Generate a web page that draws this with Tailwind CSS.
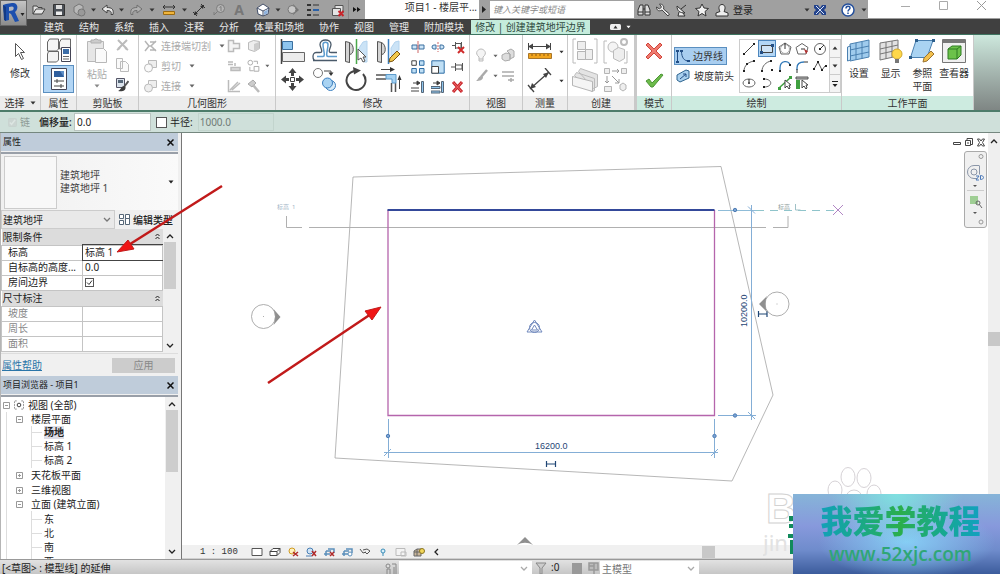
<!DOCTYPE html>
<html lang="zh-CN">
<head>
  <meta charset="UTF-8">
  <meta name="viewport" content="width=device-width, initial-scale=1.0">
  <title>项目1 - 楼层平面</title>
  <script src="https://cdn.jsdelivr.net/npm/@tailwindcss/browser@4"></script>
</head>
<body class="relative flex h-screen flex-col overflow-hidden bg-[#f0f0f0] font-['Noto_Sans','Noto_Sans_CJK_SC',sans-serif] text-[10px] leading-[14px] text-[#222]">

  <!-- shared glyphs -->
  <svg class="hidden">
    <symbol id="caret" viewBox="0 0 6 4"><path d="M0.5 0.5h5L3 3.5z" fill="currentColor"/></symbol>
    <symbol id="down" viewBox="0 0 8 6"><path d="M1 1l3 3 3-3" fill="none" stroke="currentColor" stroke-width="1.3"/></symbol>
    <symbol id="up" viewBox="0 0 8 6"><path d="M1 5l3-3 3 3" fill="none" stroke="currentColor" stroke-width="1.3"/></symbol>
    <symbol id="plus" viewBox="0 0 7 7"><path d="M.5.5h6v6h-6zM2 3.5h3M3.5 2v3" fill="#fff" stroke="#999"/></symbol>
    <symbol id="minus" viewBox="0 0 7 7"><path d="M.5.5h6v6h-6zM2 3.5h3" fill="#fff" stroke="#999"/></symbol>
  </svg>

  <!-- title bar -->
  <header class="flex h-[19px] shrink-0 items-center bg-[#a0a0a0] text-[#333]">
    <button aria-label="应用程序菜单" class="relative z-10 flex h-[26px] w-[27px] shrink-0 items-center self-start border border-[#666] bg-linear-to-b from-[#c4c4c4] to-[#8c8c8c]">
      <svg class="h-[22px] w-[25px]" viewBox="0 0 25 22"><path d="M2 3l3-1 6-1c6-1 7 6 3 9l4 9-4 1-4-8-2-1v7l-4 1z" fill="#1c4fae"/><path d="M8 5l3-.5c2.500 0 2 3.500 0 4l-3 .5z" fill="#b4b8c0"/><path d="M2 3l3 2v14l-2-1z" fill="#123a86"/><path d="M19.500 11h4l-2 3z" fill="#222"/></svg>
    </button>
    <button aria-label="打开" class="ml-[2px] flex w-[20px] justify-center"><svg class="h-[14px] w-[14px]" viewBox="0 0 14 14"><path d="M1 11V3h4l1 1.500h4V6M1 11l3-5h9l-3 5z" fill="#e4e4e4" stroke="#444"/></svg></button>
    <button aria-label="保存" class="flex w-[20px] justify-center"><svg class="h-[14px] w-[14px]" viewBox="0 0 14 14"><path d="M1.500 1.500h11v11h-11z" fill="#4b5057" stroke="#333"/><path d="M4 2h6v4H4z" fill="#ddd"/><path d="M4 8.500h6V12H4z" fill="#eee"/></svg></button>
    <button aria-label="同步" class="flex w-[20px] justify-center"><svg class="h-[14px] w-[14px]" viewBox="0 0 14 14"><path d="M2 4l5-3 4 2v6l-5 3-4-3z" fill="#b8b8b8" stroke="#777"/><circle cx="9.500" cy="9.500" r="3.500" fill="#999" stroke="#777"/></svg></button>
    <svg class="h-[4px] w-[9px]"><use href="#caret"/></svg>
    <button aria-label="撤销" class="flex w-[19px] justify-center"><svg class="h-[14px] w-[14px]" viewBox="0 0 14 14"><path d="M1 6l5-4v2.500c5 0 7 2 6 7h-2c1-3-1-4-4-4V10z" fill="#e8e8e8" stroke="#444"/></svg></button>
    <svg class="h-[4px] w-[9px]"><use href="#caret"/></svg>
    <button aria-label="重做" class="flex w-[20px] justify-center"><svg class="h-[14px] w-[14px]" viewBox="0 0 14 14"><path d="M13 6L8 2v2.500c-5 0-7 2-6 7h2c-1-3 1-4 4-4V10z" fill="#b0b0b0" stroke="#707070"/></svg></button>
    <svg class="h-[4px] w-[12px]"><use href="#caret"/></svg>
    <button aria-label="测量" class="flex w-[22px] justify-center"><svg class="h-[14px] w-[14px]" viewBox="0 0 14 14"><path d="M1 4h12M3 2L1 4l2 2M11 2l2 2-2 2" fill="none" stroke="#333"/><path d="M1.500 8.500h11v3h-11z" fill="#f0b53c" stroke="#9b6a10"/></svg></button>
    <svg class="h-[4px] w-[9px]"><use href="#caret"/></svg>
    <button aria-label="对齐尺寸标注" class="flex w-[20px] justify-center"><svg class="h-[14px] w-[14px]" viewBox="0 0 14 14"><path d="M2 12L12 2M1 9l4 4M9 1l4 4" fill="none" stroke="#333"/><path d="M2 12l1-4 3 3zM12 2l-4 1 3 3z" fill="#333"/></svg></button>
    <button aria-label="标记" class="flex w-[20px] justify-center"><svg class="h-[14px] w-[14px]" viewBox="0 0 14 14"><circle cx="8.500" cy="5.500" r="4" fill="#b4b4b4" stroke="#7c7c7c"/><path d="M5.500 8.500L2 12V9M7.500 4.500l1.500-1v4.500" fill="none" stroke="#7c7c7c"/></svg></button>
    <button aria-label="文字" class="flex w-[20px] justify-center font-bold text-[#777] text-[14px]">A</button>
    <button aria-label="三维视图" class="ml-[4px] flex w-[20px] justify-center"><svg class="h-[14px] w-[14px]" viewBox="0 0 14 14"><path d="M1 5l6-4 6 4-1 6-5 2-5-2z" fill="#fff" stroke="#44506a"/><path d="M1 5l6 3 6-3M7 8v5" fill="none" stroke="#44506a"/><path d="M8 8.500l4-2-.5 4L8 12z" fill="#8fb2dd"/></svg></button>
    <svg class="h-[4px] w-[10px]"><use href="#caret"/></svg>
    <button aria-label="剖面" class="flex w-[19px] justify-center"><svg class="h-[14px] w-[14px]" viewBox="0 0 14 14"><path d="M7 1l6 6-6 5z" fill="#777"/><circle cx="6" cy="6.500" r="4" fill="#c8c8c8" stroke="#777"/></svg></button>
    <button aria-label="细线" class="flex w-[22px] justify-center"><svg class="h-[14px] w-[14px]" viewBox="0 0 14 14"><path d="M1 2h4M1 7h4M1 12h4" stroke="#333" stroke-width="2"/><path d="M7 2h6M7 12h6" stroke="#333"/><path d="M7 7h6" stroke="#2c62a8" stroke-width="2"/></svg></button>
    <button aria-label="关闭隐藏窗口" class="ml-[4px] flex w-[20px] justify-center"><svg class="h-[14px] w-[14px]" viewBox="0 0 14 14"><path d="M1.500 5.500h8v7h-8zM4 5V2.500h8V10" fill="#e4e4e4" stroke="#555"/><path d="M7.500 8l5 5m0-5l-5 5" stroke="#c9252b" stroke-width="2"/></svg></button>
    <button aria-label="更多" class="flex h-full w-[17px] items-center justify-center border-l border-[#888]"><svg class="h-[5px] w-[8px]" viewBox="0 0 8 5"><path d="M0 0l3.500 2.500L0 5zM4 0l3.500 2.500L4 5z" fill="#111"/></svg></button>
    <div class="h-full w-[114px] truncate bg-white pr-[2px] text-right leading-[15px] text-[#333]">项目1 - 楼层平...</div>
    <button aria-label="展开搜索" class="flex h-full w-[11px] items-center justify-center"><svg class="h-[7px] w-[5px]" viewBox="0 0 5 7"><path d="M0 0l4 3.500L0 7z" fill="#222"/></svg></button>
    <input type="text" aria-label="搜索" placeholder="键入关键字或短语" class="h-[17px] w-[144px] bg-white px-[3px] text-[9px] italic placeholder:text-[#888]">
    <button aria-label="查找" class="flex w-[20px] justify-center"><svg class="h-[14px] w-[14px]" viewBox="0 0 14 14"><path d="M3 2h3v10H1V7zM8 2h3l2 5v5H8z" fill="#ddd" stroke="#333"/><path d="M6 6h2M1 9h5M8 9h5" stroke="#333"/></svg></button>
    <button aria-label="速博应用" class="flex w-[18px] justify-center"><svg class="h-[14px] w-[14px]" viewBox="0 0 14 14"><path d="M6 7l6 6 1.500-2-6-5c1-3-1-5-4-5l2 3-2 2-3-2c0 3 2 5 5.500 3z" fill="#eee" stroke="#444"/></svg></button>
    <button aria-label="通讯中心" class="flex w-[20px] justify-center"><svg class="h-[14px] w-[14px]" viewBox="0 0 14 14"><path d="M2 3c0 5 3 7 8 7zM6 6l5-4M4 9l-1 4h7l-2-3" fill="#eee" stroke="#333"/></svg></button>
    <button aria-label="收藏夹" class="flex w-[20px] justify-center"><svg class="h-[14px] w-[14px]" viewBox="0 0 14 14"><path d="M7 1l2 4 4.500.5-3.500 3 1 4.500-4-2.500L3 13l1-4.500-3.500-3L5 5z" fill="#f2f2f2" stroke="#333"/></svg></button>
    <button class="flex items-center gap-[4px] pl-[3px] text-[#222]"><svg class="h-[14px] w-[14px]" viewBox="0 0 14 14"><path d="M1 13v-3l4-1.500C3 5 4 1.500 7 1.500S11 5 9 8.500l4 1.500v3z" fill="#eee" stroke="#333"/></svg>登录</button>
    <div class="flex h-full flex-1 items-center justify-end">
      <svg class="h-[4px] w-[8px]"><use href="#caret"/></svg>
      <button aria-label="Exchange Apps" class="mr-[14px] ml-[2px]"><svg class="h-[14px] w-[14px]" viewBox="0 0 14 14"><path d="M1 2h4l2 3 2-3h4v3l-2 2 2 2v3H9L7 9l-2 3H1V9l2-2-2-2z" fill="#23438c"/><path d="M3 3l8 8M11 3l-8 8" stroke="#d8e4f8"/></svg></button>
      <button aria-label="帮助"><svg class="h-[14px] w-[14px]" viewBox="0 0 14 14"><circle cx="7" cy="7" r="6" fill="#fff" stroke="#25509c" stroke-width="1.500"/><path d="M5 5.500c0-3 4-3 4-.5 0 1.500-2 1.500-2 3.500M7 9.500V11" fill="none" stroke="#25509c" stroke-width="1.500"/></svg></button>
      <svg class="ml-[5px] h-[4px] w-[8px]"><use href="#caret"/></svg>
    </div>
    <div class="flex h-[18px] w-[132px] items-start justify-around self-start bg-white pt-px pl-[18px]">
      <button aria-label="最小化"><svg class="h-[9px] w-[9px]" viewBox="0 0 9 9"><path d="M0 5.500h9" stroke="#aaa"/></svg></button>
      <button aria-label="最大化"><svg class="h-[9px] w-[9px]" viewBox="0 0 9 9"><path d="M.5.5h8v8h-8z" fill="none" stroke="#aaa"/></svg></button>
      <button aria-label="关闭"><svg class="h-[9px] w-[9px]" viewBox="0 0 9 9"><path d="M0 0l9 9M9 0L0 9" stroke="#999"/></svg></button>
    </div>
  </header>

  <!-- tabs -->
  <nav class="flex h-[16px] shrink-0 items-end gap-[15px] border-b border-[#3f7561] bg-[#404040] pl-[44px] whitespace-nowrap text-[#e8e8e8]">
    <a href="#">建筑</a><a href="#">结构</a><a href="#">系统</a><a href="#">插入</a><a href="#">注释</a><a href="#">分析</a><a href="#">体量和场地</a><a href="#">协作</a><a href="#">视图</a><a href="#">管理</a><a href="#">附加模块</a>
    <a href="#" class="-ml-[8px] w-[119px] bg-[#c5ecdc] text-center text-[#2f4a41]">修改 | 创建建筑地坪边界</a>
    <button aria-label="最小化功能区" class="mb-[4px] ml-[5px] flex items-center gap-[5px] text-white"><svg class="h-[6px] w-[11px]" viewBox="0 0 11 6"><rect width="11" height="6" rx="1.500" fill="#eee"/><path d="M3.500 4.500h4l-2-3z" fill="#333"/></svg><svg class="h-[4px] w-[5px]"><use href="#caret"/></svg></button>
  </nav>

  <!-- ribbon -->
  <section class="flex h-[77px] shrink-0 border-b-2 border-[#4d7c6a] bg-white text-[#333] [&>section]:flex [&>section]:shrink-0 [&>section]:flex-col [&>section]:border-r [&>section]:border-[#c9c9c9] [&>section>div]:flex-1 [&_h2]:h-[14px] [&_h2]:bg-[#ececec] [&_h2]:text-center">
    <section class="w-[41px]">
      <div class="flex flex-col items-center pt-[7px]">
        <button class="flex flex-col items-center gap-[5px]"><svg class="h-[19px] w-[12px]" viewBox="0 0 12 19"><path d="M1.500 1.500v13l3-3 3 6 2-1-3-6h4z" fill="#fff" stroke="#555"/></svg>修改</button>
      </div>
      <h2 class="flex items-center justify-center gap-[5px]">选择 <svg class="h-[4px] w-[6px]"><use href="#caret"/></svg></h2>
    </section>
    <section class="w-[36px]">
      <div class="flex flex-col items-center gap-[2px] pt-[2px]">
        <button aria-label="类型属性"><svg class="h-[26px] w-[26px]" viewBox="0 0 26 26"><path d="M1.500 5l2-3h9v10l-2 2h-9zM13.500 5l2-3h9v10h-11z" fill="#f4f4f4" stroke="#666"/><path d="M1.500 17l1-2.500h10V23l-2 2h-9z" fill="#f4f4f4" stroke="#666"/><path d="M15.500 10.500h9v14h-9z" fill="#fff" stroke="#445"/><path d="M17 12h6v5h-6z" fill="#3d6ea8"/><path d="M17 19.500h6M17 22h6" stroke="#666"/></svg></button>
        <button aria-label="属性" class="flex h-[28px] w-[31px] items-center justify-center border border-[#5a8fc0] bg-[#b3d6f5]"><svg class="h-[24px] w-[18px]" viewBox="0 0 18 24"><path d="M1.500 1.500h15v21h-15z" fill="#fff" stroke="#445"/><path d="M4 4h10v6H4z" fill="#2f5f9e"/><path d="M10 4h4v6z" fill="#5e8fc8"/><path d="M4 14h10M4 19h10M7 12v4M11 17v4" stroke="#444"/></svg></button>
      </div>
      <h2>属性</h2>
    </section>
    <section class="w-[62px]">
      <div class="flex justify-between px-[9px] pt-[3px] text-[#aaa]">
        <button class="flex w-[22px] flex-col items-center gap-[3px] whitespace-nowrap"><svg class="h-[26px] w-[22px]" viewBox="0 0 22 26"><path d="M1.500 3.500h16v20h-16z" fill="#e6e6e6" stroke="#b8b8b8"/><path d="M5 5V2h3l1-1h2l1 1h3v3z" fill="#ccc" stroke="#b0b0b0"/><path d="M9.500 10.500h8l3 3v11h-11z" fill="#fafafa" stroke="#b8b8b8"/></svg>粘贴<svg class="h-[4px] w-[6px] text-[#888]"><use href="#caret"/></svg></button>
        <div class="flex flex-col gap-[6px]">
          <button aria-label="剪切"><svg class="h-[14px] w-[13px]" viewBox="0 0 13 14"><path d="M2 2l9 9M11 2l-9 9M1 12l3-2M12 12l-3-2" stroke="#bbb" stroke-width="2"/></svg></button>
          <button aria-label="复制"><svg class="h-[14px] w-[13px]" viewBox="0 0 13 14"><path d="M.5.5h6v10h-6zM4.500 3.500h5l3 3v7h-8z" fill="#fafafa" stroke="#bbb"/></svg></button>
          <button aria-label="匹配类型"><svg class="h-[14px] w-[13px]" viewBox="0 0 13 14"><path d="M.5.5h8v9h-8z" fill="#dbe3ec" stroke="#556"/><path d="M2 2h5v3H2z" fill="#567"/><path d="M12.500 3L8 9" stroke="#555" stroke-width="2"/><path d="M8 8c-3 0-3 4-6 5 4 1 8 0 7.500-4z" fill="#3d3d3d"/></svg></button>
        </div>
      </div>
      <h2>剪贴板</h2>
    </section>
    <section class="w-[137px]">
      <div class="flex justify-between pt-[4px] pr-[5px] pl-[5px] whitespace-nowrap text-[#aaa]">
        <div class="flex flex-col gap-[6px]">
          <button class="flex items-center gap-[4px]"><svg class="h-[14px] w-[13px]" viewBox="0 0 13 14"><path d="M1 2l4 5-4 5M4 7h3M12 2L7 7l5 5M6 3h6M6 11h6" fill="none" stroke="#b5b5b5" stroke-width="1.500"/></svg>连接端切割<svg class="ml-[4px] h-[4px] w-[6px] text-[#666]"><use href="#caret"/></svg></button>
          <button class="flex items-center gap-[4px]"><svg class="h-[14px] w-[13px]" viewBox="0 0 13 14"><path d="M4.500 1.500h8v7h-4a4 4 0 0 0-4-4z" fill="#eee" stroke="#bbb"/><circle cx="4.500" cy="9" r="4" fill="#fafafa" stroke="#bbb"/></svg>剪切<svg class="ml-[4px] h-[4px] w-[6px] text-[#666]"><use href="#caret"/></svg></button>
          <button class="flex items-center gap-[4px]"><svg class="h-[14px] w-[13px]" viewBox="0 0 13 14"><path d="M4.500 1.500h8v7h-4M4.500 1.500V5" fill="#eee" stroke="#bbb"/><circle cx="4.500" cy="9" r="4" fill="#eee" stroke="#bbb"/></svg>连接<svg class="ml-[4px] h-[4px] w-[6px] text-[#666]"><use href="#caret"/></svg></button>
        </div>
        <div class="grid grid-cols-[20px_23px] content-start gap-y-[6px]">
          <button aria-label="墙连接"><svg class="h-[14px] w-[14px]" viewBox="0 0 14 14"><path d="M1.500 1.500h5v3h6v5h-6v3h-5z" fill="#f4f4f4" stroke="#bbb" stroke-width="1.500"/></svg></button>
          <button aria-label="拆分面"><svg class="h-[14px] w-[14px]" viewBox="0 0 14 14"><path d="M1.500 3.500l5-2 6 1v7l-5 3-6-2z" fill="#eee" stroke="#bbb"/><path d="M7 5l5-2v7l-5 2z" fill="#ccc"/></svg></button>
          <button aria-label="梁连接"><svg class="h-[14px] w-[14px]" viewBox="0 0 14 14"><path d="M1 3h5M1 5.500h5M4 8.500h9v3H4zM8 4v3" fill="#ddd" stroke="#bbb" stroke-width="1.500"/></svg></button>
          <button aria-label="填色" class="flex items-center gap-[5px]"><svg class="h-[14px] w-[14px]" viewBox="0 0 14 14"><circle cx="3.500" cy="3.500" r="2.500" fill="none" stroke="#aaa"/><path d="M7 2h4v3M3 8v4h4M7.500 7.500h5v5h-5z" fill="none" stroke="#aaa"/></svg><svg class="h-[4px] w-[5px] text-[#666]"><use href="#caret"/></svg></button>
          <button aria-label="连接屋顶"><svg class="h-[14px] w-[14px]" viewBox="0 0 14 14"><path d="M1.500 1v11.500H13M3 11L11 3M5 11l8-7" fill="none" stroke="#bbb" stroke-width="1.500"/></svg></button>
          <button aria-label="拆除"><svg class="h-[14px] w-[14px]" viewBox="0 0 14 14"><path d="M1 5l5-4 3 3-4 4z" fill="#ccc" stroke="#aaa"/><path d="M6 6l6 7" stroke="#bbb" stroke-width="2.500"/></svg></button>
        </div>
      </div>
      <h2>几何图形</h2>
    </section>
    <section class="w-[194px]">
      <div class="flex pt-[4px] pl-[4px]">
        <div class="grid grid-cols-[repeat(4,32px)] content-start gap-y-[3px]">
          <button aria-label="对齐"><svg class="h-[25px] w-[26px]" viewBox="0 0 26 25"><path d="M1.500 0v25" stroke="#444" stroke-width="1.500"/><path d="M2.500 2.500h10v8h-10z" fill="#8ec5ee" stroke="#3a6f9f"/><path d="M2.500 13.500h22v9h-22z" fill="#ececec" stroke="#666"/></svg></button>
          <button aria-label="偏移"><svg class="h-[25px] w-[26px]" viewBox="0 0 26 25"><path d="M1 21.500h24M25 13.500h-6c-4 0 0-5 0-8 0-6-11-6-11 0 0 3 4 8 0 8H4c-4 0-4 8 0 8" fill="none" stroke="#4a5a6a" stroke-width="1.300"/><path d="M25 17.500h-9c-3 0 0-7 0-12 0-3-5-3-5 0 0 5 3 12 0 12H5" fill="none" stroke="#5d9cce" stroke-width="1.500"/></svg></button>
          <button aria-label="镜像-拾取轴"><svg class="h-[25px] w-[26px]" viewBox="0 0 26 25"><path d="M1.500 2.500l4 1c5 2 5 12 0 12v8l-4-1z" fill="#d4d4d4" stroke="#555"/><path d="M5.500 3.500v20" stroke="#555"/><path d="M23 2l-4 1-4 6v8l5-2v8h3z" fill="#cbe3f6" stroke="#b3d3ee"/><path d="M12.500 0v25" stroke="#4aa84a" stroke-width="1.500"/><path d="M14 10v11l3-2 2 4 2-1-2-4h3z" fill="#fff" stroke="#555"/></svg></button>
          <button aria-label="镜像-绘制轴"><svg class="h-[25px] w-[26px]" viewBox="0 0 26 25"><path d="M1.500 2.500l4 1c5 2 5 12 0 12v8l-4-1z" fill="#d4d4d4" stroke="#555"/><path d="M5.500 3.500v20" stroke="#555"/><path d="M23 2l-4 1-4 6v8l8-6z" fill="#cbe3f6" stroke="#b3d3ee"/><path d="M12.500 0v25" stroke="#3b7fc0" stroke-width="1.500"/><path d="M13 23l1-4 7-7 3 3-7 7z" fill="#f2c94d" stroke="#7a5310"/></svg></button>
          <button aria-label="移动"><svg class="h-[25px] w-[25px]" viewBox="0 0 25 25"><path d="M12.500 1l4 5h-2.500v3h-3V6H8.500zM12.500 24l4-5h-2.500v-3h-3v3H8.500zM1 12.500l5-4V11h3v3H6v2.500zM24 12.500l-5-4V11h-3v3h3v2.500z" fill="#444"/><path d="M10.500 10.500h4v4h-4z" fill="#fff" stroke="#444"/></svg></button>
          <button aria-label="复制图元"><svg class="h-[25px] w-[26px]" viewBox="0 0 26 25"><circle cx="6" cy="6" r="4.500" fill="#fff" stroke="#777"/><circle cx="18.500" cy="18.500" r="5" fill="#d8ecf9" stroke="#3b7fc0"/><circle cx="15.500" cy="16" r="5" fill="#a9d3f2" stroke="#3b7fc0"/><path d="M12 4h7v2" fill="none" stroke="#444"/><path d="M16.500 5.500h5L19 9z" fill="#333"/></svg></button>
          <button aria-label="旋转"><svg class="h-[25px] w-[25px]" viewBox="0 0 25 25"><path d="M19 7a9.500 9.500 0 1 1-8-3" fill="none" stroke="#444" stroke-width="2"/><path d="M9 0l8 3.500-7 4z" fill="#444"/></svg></button>
          <button aria-label="修剪/延伸为角"><svg class="h-[25px] w-[26px]" viewBox="0 0 26 25"><path d="M5 2.500h10" stroke="#444"/><path d="M14 0l5 2.500L14 5zM21.500 13l2-5 2 5z" fill="#333"/><path d="M23.500 22V12" stroke="#444"/><path d="M0 8h10M0 12h10M15.500 16v9M19.500 16v9" stroke="#555" stroke-width="1.500"/><path d="M10 7.500h10V16h-4v-4h-6z" fill="#a5d2f2" stroke="#5b9acb"/></svg></button>
        </div>
        <div class="grid grid-cols-[repeat(3,20px)] content-start gap-y-[6px] pt-px pl-[3px]">
          <button aria-label="拆分图元"><svg class="h-[14px] w-[14px]" viewBox="0 0 14 14"><path d="M1 5h5v4H1zM8 5h5v4H8z" fill="#cde5f7" stroke="#3b6f9f"/><path d="M7 1v12" stroke="#c66"/></svg></button>
          <button aria-label="用间隙拆分"><svg class="h-[14px] w-[14px]" viewBox="0 0 14 14"><path d="M5 5H3a2 2 0 0 0 0 4h2zM9 5h2a2 2 0 0 1 0 4H9z" fill="#cde5f7" stroke="#3b6f9f"/><path d="M7 2v10" stroke="#c66" stroke-dasharray="2 1"/></svg></button>
          <button aria-label="解锁"><svg class="h-[14px] w-[14px]" viewBox="0 0 14 14"><path d="M1 5.500h3M4.500 2v7M5 3.500h5V8H5M10.500 2v7" fill="none" stroke="#555"/><path d="M7 7l6 6m0-6l-6 6" stroke="#cf2b2b" stroke-width="2"/></svg></button>
          <button aria-label="阵列"><svg class="h-[14px] w-[14px]" viewBox="0 0 14 14"><path d="M.8.8h4.500v4.500H.8z" fill="#fff" stroke="#444"/><path d="M8.500.8H13v4.500H8.500zM.8 8.500h4.500V13H.8zM8.500 8.500H13V13H8.500z" fill="#bfdff5" stroke="#2f6ea6"/></svg></button>
          <button aria-label="缩放"><svg class="h-[14px] w-[14px]" viewBox="0 0 14 14"><path d="M.8.8h12.400v12.400H.8z" fill="#bfdff5" stroke="#2f6ea6"/><path d="M.8 6.500h6.700v6.700H.8z" fill="#fff" stroke="#444"/></svg></button>
          <button aria-label="锁定"><svg class="h-[14px] w-[14px]" viewBox="0 0 14 14"><path d="M0 7h4M4.500 3v8M5 5h6v4H5M11.500 3v8" fill="none" stroke="#555"/></svg></button>
          <button aria-label="修剪/延伸单个"><svg class="h-[14px] w-[14px]" viewBox="0 0 14 14"><path d="M2 3h4M6 1l3 2-3 2zM0 8h8M0 11h8" fill="#333" stroke="#444"/><path d="M10.500 1.500h2v11h-2z" fill="#8ec5ee" stroke="#567"/></svg></button>
          <button aria-label="修剪/延伸多个"><svg class="h-[14px] w-[14px]" viewBox="0 0 14 14"><path d="M2 3h4M6 1l3 2-3 2z" fill="#333" stroke="#444"/><path d="M0 6.500h9v2H0zM0 11h9v2H0z" fill="#8ec5ee" stroke="#567"/><path d="M10.500 1.500h2v11h-2z" fill="#8ec5ee" stroke="#567"/></svg></button>
          <button aria-label="删除"><svg class="h-[14px] w-[14px]" viewBox="0 0 14 14"><path d="M2 2l9 10M11 2L2 12" stroke="#c8252b" stroke-width="3"/><path d="M2.500 2.500l8 9M10.500 2.500l-8 9" stroke="#f07070"/></svg></button>
        </div>
      </div>
      <h2>修改</h2>
    </section>
    <section class="w-[53px]">
      <div class="grid grid-cols-[26px_18px] content-center gap-y-[4px] pl-[5px] text-[#666]">
        <button aria-label="隐藏" class="flex items-center gap-[4px]"><svg class="h-[16px] w-[14px]" viewBox="0 0 14 16"><path d="M4 9C-1 5 3 1 6 1s7 4 2 8v4H4zM4 11h4" fill="#f4f4f4" stroke="#bbb"/></svg><svg class="h-[4px] w-[5px]"><use href="#caret"/></svg></button>
        <button aria-label="置换"><svg class="h-[16px] w-[14px]" viewBox="0 0 14 16"><path d="M1 7l4-2 4 1v6l-5 1-3-2zM6 3l4-2 3 2v6l-4 2V6z" fill="#ddd" stroke="#aaa"/></svg></button>
        <button aria-label="替换" class="flex items-center gap-[4px]"><svg class="h-[16px] w-[14px]" viewBox="0 0 14 16"><path d="M12 2L6 9" stroke="#aaa" stroke-width="2.500"/><path d="M6 8c-3 1-3 4-5 5 4 0 7-1 7-4z" fill="#aaa"/></svg><svg class="h-[4px] w-[5px]"><use href="#caret"/></svg></button>
        <button aria-label="线处理"><svg class="h-[16px] w-[14px]" viewBox="0 0 14 16"><path d="M1 4h12M1 8h12M7 12h6M10 10v4" stroke="#aaa" stroke-width="1.500"/></svg></button>
      </div>
      <h2>视图</h2>
    </section>
    <section class="w-[45px]">
      <div class="flex flex-col gap-[4px] pt-[5px] pl-[4px] text-[#333]">
        <button aria-label="测量距离" class="flex items-center gap-[7px]"><svg class="h-[24px] w-[25px]" viewBox="0 0 25 24"><path d="M2 6.500h21M1.500 3v7M23.500 3v7" stroke="#444"/><path d="M1 6.500l5-3v6zM24 6.500l-5-3v6z" fill="#444"/><path d="M1.500 13.500h23v5h-23z" fill="#f2a51e" stroke="#a8762a"/><path d="M5 14v2M9 14v2M13 14v2M17 14v2M21 14v2" stroke="#8c5a10"/></svg><svg class="h-[4px] w-[5px]"><use href="#caret"/></svg></button>
        <button aria-label="尺寸标注" class="flex items-center gap-[7px]"><svg class="h-[25px] w-[25px]" viewBox="0 0 25 25"><path d="M3 21L22 4M1 17l6 7M18 0l6 7" stroke="#444" stroke-width="1.300"/><path d="M3 21l2-6 4 4zM22 4l-6 2 3 4z" fill="#444"/></svg><svg class="h-[4px] w-[5px]"><use href="#caret"/></svg></button>
      </div>
      <h2>测量</h2>
    </section>
    <section class="w-[67px]">
      <div class="grid grid-cols-[31px_26px] content-start gap-y-[3px] pt-[3px] pl-[4px]">
        <button aria-label="创建部件"><svg class="h-[26px] w-[26px]" viewBox="0 0 26 26"><path d="M4 1H1v24h3M22 1h3v24h-3" fill="none" stroke="#bbb"/><path d="M5.500 3.500h8v8h-8zM5.500 13.500h8v8h-8zM13.500 11.500h7v10h-7z" fill="#eee" stroke="#b5b5b5"/></svg></button>
        <button aria-label="创建零件"><svg class="h-[26px] w-[26px]" viewBox="0 0 26 26"><path d="M4 3H1v22h3M21 25h3V13" fill="none" stroke="#bbb"/><circle cx="10" cy="9" r="5" fill="#f4f4f4" stroke="#bbb"/><path d="M10.500 12.500l5-3 6 2v9l-5 3-6-3z" fill="#eee" stroke="#bbb"/><circle cx="21" cy="4" r="3" fill="#fff" stroke="#bbb" stroke-width="2"/></svg></button>
        <button aria-label="创建组"><svg class="h-[26px] w-[26px]" viewBox="0 0 26 26"><path d="M6.500 4.500l2-3 17 6v12l-4 2zM2.500 8.500l2-3 18 6v12l-3 1z" fill="#e4e4e4" stroke="#bbb"/><path d="M.5 9.500l20 5v10l-20-6z" fill="#f4f4f4" stroke="#b5b5b5"/></svg></button>
        <button aria-label="创建类似"><svg class="h-[26px] w-[26px]" viewBox="0 0 26 26"><path d="M1.500 1.500h5v5h-5zM18.500 1.500h5v5h-5zM1.500 19.500h7v5h-7zM17 18l3-2 3 2v4l-3 2-3-2z" fill="#eee" stroke="#b5b5b5"/><path d="M9 4h7M4 9v7M9 9l7 7M14 2l2 2-2 2M2 14l2 2 2-2M16 12v4h-4" fill="none" stroke="#999"/></svg></button>
      </div>
      <h2>创建</h2>
    </section>
    <section class="w-[37px] border-l-2 [&>h2]:bg-[#cdebe0]">
      <div class="flex flex-col items-center gap-[9px] pt-[6px]">
        <button aria-label="取消编辑"><svg class="h-[20px] w-[18px]" viewBox="0 0 18 20"><path d="M1 4l2-2 6 6 6-6 2 2-6 6 6 6-2 2-6-6-6 6-2-2 6-6z" fill="#ee7b70" stroke="#d2453b"/></svg></button>
        <button aria-label="完成编辑"><svg class="h-[20px] w-[19px]" viewBox="0 0 19 20"><path d="M1 11l3-2 3 4 9-9 2 1L8 17H6z" fill="#6cbb4a" stroke="#4c9536"/></svg></button>
      </div>
      <h2>模式</h2>
    </section>
    <section class="w-[170px] [&>h2]:bg-[#cdebe0]">
      <div class="flex gap-[5px] pt-[4px] pl-[2px]">
        <div class="flex w-[60px] flex-col gap-[2px] pt-[8px] whitespace-nowrap">
          <button class="flex h-[18px] w-[53px] items-center gap-[3px] border border-[#5a8fc0] bg-[#a9cef0]"><svg class="h-[15px] w-[15px]" viewBox="0 0 15 15"><path d="M2.500 2v11M6.500 2c0 7 3 10 7 10" fill="none" stroke="#234f86"/><path d="M1 1h3v2H1zM1 12h3v2H1zM5 1h3v2H5zM12 11h3v2h-3z" fill="#234f86"/></svg>边界线</button>
          <button class="flex h-[18px] items-center gap-[4px] pl-[2px]"><svg class="h-[14px] w-[14px]" viewBox="0 0 14 14"><path d="M1 6l9-5 3 1v7L4 13l-3-2z" fill="#a9d0ee" stroke="#2f6590"/><path d="M4 10l6-5M10 5v3M10 5H7" stroke="#234f86"/></svg>坡度箭头</button>
        </div>
        <div class="flex h-[54px] border border-[#ccc]">
          <div class="grid grid-cols-5 place-items-center [&_svg]:h-[14px] [&_svg]:w-[14px] [&>button]:flex [&>button]:h-[17px] [&>button]:w-[18px] [&>button]:items-center [&>button]:justify-center">
            <button aria-label="直线"><svg viewBox="0 0 14 14"><path d="M2 12L12 2" stroke="#444"/><path d="M1 11h2v2H1zM11 1h2v2h-2z" fill="#222"/></svg></button>
            <button aria-label="矩形" class="border border-[#4d86bd] bg-[#b3d6f5]"><svg viewBox="0 0 14 14"><path d="M1.500 3.500h11v7h-11z" fill="#cfe3f5" stroke="#444"/><path d="M0 9h3v3H0zM11 2h3v3h-3z" fill="#234f86"/></svg></button>
            <button aria-label="内接多边形"><svg viewBox="0 0 14 14"><path d="M7 1l6 4-2 7H3L1 5z" fill="none" stroke="#666"/><circle cx="7" cy="7" r="4.500" fill="none" stroke="#aaa"/><path d="M7 1v6" stroke="#333"/></svg></button>
            <button aria-label="外接多边形"><svg viewBox="0 0 14 14"><path d="M7 1.500l6 4-2 6.500H3L1 5.500z" fill="none" stroke="#666"/><path d="M6 7h4" stroke="#333"/><path d="M9 7l4 2-2 3z" fill="#b03030"/></svg></button>
            <button aria-label="圆形"><svg viewBox="0 0 14 14"><circle cx="7" cy="7" r="5.500" fill="none" stroke="#666"/><path d="M7 7l4-4" stroke="#333"/><path d="M6 6h2v2H6z" fill="#222"/></svg></button>
            <button aria-label="起点-终点-半径弧"><svg viewBox="0 0 14 14"><path d="M2 12c0-5 4-9 10-10" fill="none" stroke="#666"/><path d="M1 11h2v2H1zM11 1h2v2h-2zM4 4h2v2H4z" fill="#222"/></svg></button>
            <button aria-label="圆心-端点弧"><svg viewBox="0 0 14 14"><path d="M2 12c0-5 4-9 9-10" fill="none" stroke="#666"/><path d="M1 11h2v2H1zM10 1h2v2h-2zM11 10h2v2h-2z" fill="#222"/></svg></button>
            <button aria-label="相切弧"><svg viewBox="0 0 14 14"><path d="M2 13V9c0-8 9-8 10-3" fill="none" stroke="#2f78b8" stroke-width="1.300"/><path d="M1 11h2v2H1zM11 5h2v2h-2z" fill="#222"/></svg></button>
            <button aria-label="圆角弧"><svg viewBox="0 0 14 14"><path d="M2 11V9c0-4 3-6 7-6" fill="none" stroke="#2f78b8" stroke-width="1.300"/><path d="M9 3h4M2 10v4" stroke="#333"/></svg></button>
            <button aria-label="样条曲线"><svg viewBox="0 0 14 14"><path d="M1 10l4-7 4 8 3-4" fill="none" stroke="#555"/><path d="M0 9h2v2H0zM4 2h2v2H4zM8 10h2v2H8zM12 6h2v2h-2z" fill="#222"/></svg></button>
            <button aria-label="椭圆"><svg viewBox="0 0 14 14"><ellipse cx="7" cy="7" rx="6" ry="4" fill="none" stroke="#666"/><path d="M7 3v5M6 7h2" stroke="#222"/></svg></button>
            <button aria-label="半椭圆"><svg viewBox="0 0 14 14"><path d="M4 3c9 0 9 8 0 8" fill="none" stroke="#666"/><path d="M3 2h2v2H3zM3 10h2v2H3z" fill="#222"/></svg></button>
            <button aria-label="拾取线"><svg viewBox="0 0 14 14"><path d="M1 12L12 2" stroke="#3fa03f" stroke-width="1.500"/><path d="M0 11h3v3H0zM11 0h3v3h-3z" fill="#3fa03f"/><path d="M7 4v8l2-2 2 3 1-1-1-3h2z" fill="#fff" stroke="#444"/></svg></button>
            <button aria-label="拾取墙"><svg viewBox="0 0 14 14"><path d="M1 1h12v2H1z" fill="#bbb" stroke="#555"/><path d="M1 4h4v9H1z" fill="#3fa03f"/><path d="M7 4v8l2-2 2 3 1-1-1-3h2z" fill="#fff" stroke="#444"/></svg></button>
          </div>
          <div class="flex w-[11px] flex-col border-l border-[#ccc] bg-[#f4f4f4] [&>button]:flex [&>button]:flex-1 [&>button]:items-center [&>button]:justify-center">
            <button aria-label="上一行"><svg class="h-[4px] w-[6px] rotate-180"><use href="#caret"/></svg></button>
            <button aria-label="下一行" class="border-y border-[#ccc]"><svg class="h-[4px] w-[6px]"><use href="#caret"/></svg></button>
            <button aria-label="展开"><svg class="h-[6px] w-[6px]" viewBox="0 0 6 6"><path d="M0 .5h6" stroke="#222"/><path d="M.5 3h5L3 6z" fill="#222"/></svg></button>
          </div>
        </div>
      </div>
      <h2>绘制</h2>
    </section>
    <section class="w-[132px] [&>h2]:bg-[#cdebe0]">
      <div class="grid grid-cols-4 pt-[3px] pr-[3px] pl-px [&_button]:flex [&_button]:flex-col [&_button]:items-center [&_button]:justify-start [&_button]:gap-[3px] [&_button]:leading-[13px] [&_svg]:h-[26px] [&_svg]:w-[26px]">
        <button><svg viewBox="0 0 26 26"><path d="M4 6l19-4v17L4 23z" fill="#9fcbed" stroke="#4a80b0"/><path d="M10 5v17M16 4v17M4 12l19-4M4 18l19-4" stroke="#4a80b0"/><path d="M1.500 9l3-1v14l-3 1z" fill="#d2e8f8" stroke="#4a80b0"/></svg>设置</button>
        <button><svg viewBox="0 0 26 26"><path d="M2 5l18-3v16L2 22z" fill="#e2e2e2" stroke="#777"/><path d="M8 4v17M14 3v16M2 11l18-4M2 16l18-4" stroke="#777"/><circle cx="19" cy="16" r="5" fill="#ffd84a" stroke="#d0a830"/><path d="M17 21h4v4h-4z" fill="#777"/></svg>显示</button>
        <button><svg viewBox="0 0 26 26"><path d="M7 2.500h17l-6 17H1.500z" fill="#a9d3f2" stroke="#4a80b0"/><path d="M6 1h3v3H6zM23 1h3v3h-3zM0 18h3v3H0z" fill="#2d5f8c"/><path d="M14 24l1-4 7-7 3 3-7 7z" fill="#f2c04d" stroke="#9a7330"/></svg>参照<br>平面</button>
        <button class="whitespace-nowrap"><svg viewBox="0 0 26 26"><path d="M1.500 1.500h23v23h-23z" fill="#f0f0f0" stroke="#777"/><path d="M2 2h22v3H2z" fill="#777"/><path d="M7 11l4-3h9v9l-4 4H7z" fill="#6cc24a" stroke="#2f7d22"/><path d="M7 11h9v10M16 11l4-3" fill="none" stroke="#2f7d22"/></svg>查看器</button>
      </div>
      <h2>工作平面</h2>
    </section>
    <div class="flex-1 bg-linear-to-b from-[#cde8dd] to-[#7f8684]"></div>
  </section>

  <!-- options bar -->
  <form class="flex h-[21px] shrink-0 items-center border-b border-[#75877f] bg-[#cfe0da] pl-[8px]">
    <label class="flex items-center gap-[3px] text-[#8d9a95]"><input type="checkbox" checked disabled class="h-[9px] w-[9px] opacity-50">链</label>
    <label for="offset" class="ml-[9px] w-[35px] font-medium whitespace-nowrap">偏移量:</label>
    <input id="offset" type="text" value="0.0" class="h-[18px] w-[77px] border border-[#b9c4c0] bg-white px-[2px] pb-px">
    <label class="ml-[5px] flex items-center gap-[3px] whitespace-nowrap"><input type="checkbox" class="h-[11px] w-[11px] appearance-none border border-[#555] bg-white">半径:</label>
    <input type="text" aria-label="半径" value="1000.0" disabled class="ml-[5px] h-[18px] w-[76px] border border-[#c2d4cd] px-px text-[#6f7b76]">
  </form>

  <div class="flex min-h-0 flex-1">
    <!-- left palettes -->
    <aside class="flex w-[178px] shrink-0 flex-col border-l border-[#b5b5b5]">
      <h2 class="flex h-[18px] shrink-0 items-center justify-between bg-[#bfccda] px-[2px] text-[9px]">属性<button aria-label="关闭属性" class="pr-[2px]"><svg class="h-[7px] w-[7px]" viewBox="0 0 7 7"><path d="M.5.5l6 6m0-6l-6 6" stroke="#111" stroke-width="1.500"/></svg></button></h2>
      <button class="mt-px flex h-[58px] shrink-0 items-center border-t-2 border-[#999fa8] bg-linear-to-r from-[#f0f0f0] to-[#fafafa] pr-[4px] pl-[3px] text-left leading-[13px]">
        <span class="h-[53px] w-[53px] border border-[#ccc] bg-[#f8f8f8]"></span>
        <span class="flex-1 pl-[3px] text-[#444]">建筑地坪<br>建筑地坪 1</span>
        <svg class="h-[4px] w-[6px]"><use href="#caret"/></svg>
      </button>
      <div class="flex h-[19px] shrink-0 items-center">
        <label class="relative flex h-full w-[114px] items-center border border-[#ccc] bg-[#e9e9e9]">
          <select aria-label="类型过滤" class="w-full appearance-none pl-px"><option>建筑地坪</option></select>
          <svg class="pointer-events-none absolute right-[3px] h-[6px] w-[8px] text-[#777]"><use href="#down"/></svg>
        </label>
        <button class="flex items-center gap-[3px] pl-[4px] font-medium"><svg class="h-[11px] w-[11px]" viewBox="0 0 11 11"><path d="M.5.5h4v4h-4zM6.500.5h4v4h-4zM.5 6.500h4v4h-4zM6.500 4.500h4v6h-4z" fill="#fff" stroke="#567"/></svg>编辑类型</button>
      </div>
      <div class="flex h-[125px] shrink-0 border-b border-[#ddd]">
        <table class="h-[122px] w-[162px] table-fixed border-collapse bg-white [&_td]:h-[15px] [&_td]:border [&_td]:border-[#c4c4c4] [&_td]:p-0 [&_td]:pl-[2px] [&_td]:leading-[13px] [&_th]:h-[16px] [&_th]:bg-[#dcdcdc] [&_th]:p-0 [&_th]:pl-px [&_th]:text-left [&_th]:leading-[14px] [&_th]:font-normal">
          <colgroup><col class="w-[81px]"><col></colgroup>
          <tr><th colspan="2"><span class="flex items-center justify-between pr-[3px]">限制条件<svg class="h-[7px] w-[5px]" viewBox="0 0 5 7"><path d="M.5 3l2-2 2 2M.5 6l2-2 2 2" fill="none" stroke="#222"/></svg></span></th></tr>
          <tr><td><span class="pl-[4px]">标高</span></td><td class="outline outline-[#444]">标高 1</td></tr>
          <tr><td><span class="block truncate pl-[4px]">自标高的高度...</span></td><td>0.0</td></tr>
          <tr><td><span class="pl-[4px]">房间边界</span></td><td><label class="relative flex items-center"><input type="checkbox" checked aria-label="房间边界" class="h-[9px] w-[9px] appearance-none border border-[#555]"><svg class="absolute h-[9px] w-[9px]" viewBox="0 0 9 9"><path d="M2 4.500l2 2 3-4" fill="none" stroke="#333"/></svg></label></td></tr>
          <tr><th colspan="2"><span class="flex items-center justify-between pr-[3px]">尺寸标注<svg class="h-[7px] w-[5px]" viewBox="0 0 5 7"><path d="M.5 3l2-2 2 2M.5 6l2-2 2 2" fill="none" stroke="#222"/></svg></span></th></tr>
          <tr class="text-[#888]"><td><span class="pl-[4px]">坡度</span></td><td></td></tr>
          <tr class="text-[#888]"><td><span class="pl-[4px]">周长</span></td><td></td></tr>
          <tr class="text-[#888]"><td><span class="pl-[4px]">面积</span></td><td></td></tr>
        </table>
        <div class="flex w-[14px] flex-col items-center justify-between bg-[#f0f0f0] py-[4px]">
          <svg class="h-[6px] w-[8px]"><use href="#up"/></svg>
          <div class="mt-[3px] mb-auto h-[47px] w-[12px] bg-[#cdcdcd]"></div>
          <svg class="h-[6px] w-[8px]"><use href="#down"/></svg>
        </div>
      </div>
      <div class="flex h-[22px] shrink-0 items-center justify-between pr-[3px] pl-px">
        <a href="#" class="text-[#2a75a8] underline">属性帮助</a>
        <button disabled class="h-[15px] w-[63px] bg-[#ccc] text-[#888]">应用</button>
      </div>
      <h2 class="flex h-[18px] shrink-0 items-center justify-between bg-[#bfccda] px-[2px] text-[9px]">项目浏览器 - 项目1<button aria-label="关闭项目浏览器" class="pr-[2px]"><svg class="h-[7px] w-[7px]" viewBox="0 0 7 7"><path d="M.5.5l6 6m0-6l-6 6" stroke="#111" stroke-width="1.500"/></svg></button></h2>
      <div class="mt-px flex min-h-0 flex-1 border-t-2 border-[#999fa8] bg-white">
        <ul class="flex-1 overflow-hidden pt-px pl-[2px] leading-[14px] whitespace-nowrap">
          <li>
            <span class="flex items-center gap-[4px]"><svg class="h-[7px] w-[7px]"><use href="#minus"/></svg><svg class="h-[10px] w-[10px]" viewBox="0 0 11 10"><path d="M3 .5H.5v9H3M8 .5h2.500v9H8" fill="none" stroke="#888" stroke-dasharray="2 1"/><circle cx="5.500" cy="5" r="2" fill="none" stroke="#333"/></svg>视图 (全部)</span>
            <ul class="ml-[3px] border-l border-[#ddd] pl-[9px] [&>li>span]:flex [&>li>span]:items-center [&>li>span]:gap-[8px]">
              <li><span><svg class="h-[7px] w-[7px]"><use href="#minus"/></svg>楼层平面</span>
                <ul class="ml-[15px] border-l border-[#ddd] pb-px [&>li]:flex [&>li]:items-center [&>li]:gap-[2px] [&>li]:before:h-px [&>li]:before:w-[10px] [&>li]:before:bg-[#ddd]">
                  <li><b class="bg-[#dedee6] leading-[13px]">场地</b></li><li>标高 1</li><li>标高 2</li>
                </ul>
              </li>
              <li><span><svg class="h-[7px] w-[7px]"><use href="#plus"/></svg>天花板平面</span></li>
              <li class="pt-px"><span><svg class="h-[7px] w-[7px]"><use href="#plus"/></svg>三维视图</span></li>
              <li><span><svg class="h-[7px] w-[7px]"><use href="#minus"/></svg>立面 (建筑立面)</span>
                <ul class="ml-[15px] border-l border-[#ddd] pt-px [&>li]:flex [&>li]:items-center [&>li]:gap-[2px] [&>li]:before:h-px [&>li]:before:w-[10px] [&>li]:before:bg-[#ddd]">
                  <li>东</li><li>北</li><li>南</li><li>西</li>
                </ul>
              </li>
            </ul>
          </li>
        </ul>
        <div class="flex w-[13px] flex-col items-center justify-between bg-[#f0f0f0] py-[4px]">
          <svg class="h-[6px] w-[8px]"><use href="#up"/></svg>
          <div class="mt-[3px] mb-auto h-[62px] w-[12px] bg-[#cdcdcd]"></div>
          <svg class="h-[6px] w-[8px]"><use href="#down"/></svg>
        </div>
      </div>
    </aside>

    <!-- drawing area -->
    <main class="ml-[3px] flex min-w-0 flex-1 border-l border-[#777]">
      <div class="flex min-w-0 flex-1 flex-col">
        <div class="relative min-h-0 flex-1 bg-white">
          <svg class="absolute inset-0 h-full w-full" viewBox="182 133 806 412" preserveAspectRatio="xMinYMin meet" fill="none">
            <path d="M353 177L721 166.500L773 395L732 481L335 458Z" stroke="#a5a5a5" stroke-width=".8"/>
            <path d="M286.500 216v11.500H302M309 227.500H766M773 227.500h15V216" stroke="#b0b0b0"/>
            <path d="M388 210v205.500H714.500V210" stroke="#b565ac" stroke-width="1.300"/>
            <path d="M387.500 210H714.500" stroke="#34499a" stroke-width="1.800"/>
            <path d="M718 210.500h38" stroke="#8fbcd8"/>
            <path d="M756 210.500h80" stroke="#8fc4cb" stroke-dasharray="8 6"/>
            <path d="M833 205l10 10M843 205l-10 10" stroke="#b186c4"/>
            <path d="M751.500 205v215M718 415.500h38M748 206.500l7 7M748 412l7 7M388.500 419v39M714.500 419v39M384 452.500H718M384 456l7-7M711 456l7-7" stroke="#84aed6"/>
            <g fill="#7aa3d4" stroke="#4f7db5"><circle cx="735" cy="210" r="1.700"/><circle cx="735" cy="415.500" r="1.700"/><circle cx="388" cy="436" r="1.700"/><circle cx="714.500" cy="436" r="1.700"/></g>
            <path d="M546.500 461v6M555.500 461v6M547 464h8M758.500 311v6M767 311v6M759 314h8" stroke="#1f4675" stroke-width="1.200"/>
            <g fill="#1f4675" class="font-['Liberation_Sans',sans-serif] text-[9px]"><text x="535" y="449">16200.0</text><text transform="translate(747 327) rotate(-90)">10200.0</text></g>
            <g fill="#8f8f8f"><path d="M280.500 317l-7-8c2 5 2 11 0 16z"/><path d="M759 304l8-8c-2 5-2 11 0 16z"/><path d="M517 545l8-8 8 8c-5-3-11-3-16 0z"/></g>
            <g stroke="#999" stroke-width=".8"><circle cx="263.500" cy="316.500" r="12"/><circle cx="777" cy="304" r="12"/><path d="M263 316.500h1M776.500 304h1"/></g>
            <path d="M534.500 320l7.500 12h-15zM534.500 322.500a5 5 0 0 1 0 10a5 5 0 0 1 0-10M534.500 325l3 5h-6z" stroke="#7189bd"/>
            <g fill="#9fb4c6" class="text-[6px]"><text x="277" y="209">标高</text><text x="292" y="209">1</text></g>
            <g fill="#8e9c9c" class="text-[6px]"><text x="778" y="209">标高</text></g>
            <path d="M795.500 204v6h5" stroke="#9fc1c7"/>
            <!-- watermark -->
            <g stroke="#d6d2d6"><ellipse cx="848" cy="477" rx="7" ry="9.500"/><ellipse cx="864" cy="478" rx="7" ry="9.500"/><ellipse cx="835" cy="490" rx="7" ry="9"/><ellipse cx="874" cy="494" rx="7" ry="9"/><circle cx="854" cy="498" r="8"/></g>
            <text x="766" y="523" stroke="#d3d3d3" class="font-['Liberation_Sans',sans-serif] text-[42px] font-bold">B</text>
          </svg>
          <div class="absolute top-[5px] right-[3px] flex gap-[4px]">
            <button aria-label="最小化视图"><svg class="h-[9px] w-[8px]" viewBox="0 0 8 9"><path d="M.5 4.500h7v2h-7z" fill="#fff" stroke="#444"/></svg></button>
            <button aria-label="还原视图"><svg class="h-[9px] w-[8px]" viewBox="0 0 8 9"><path d="M2 2V.5h5.500v6H6M.5 2.500h5v5h-5zM2 5h2" fill="none" stroke="#444"/></svg></button>
            <button aria-label="关闭视图"><svg class="h-[9px] w-[8px]" viewBox="0 0 8 9"><path d="M.5 1h2L4 3l1.500-2h2l-2 3.500 2 3.500h-2L4 6 2.500 8h-2l2-3.500z" fill="#fff" stroke="#444"/></svg></button>
          </div>
          <div class="absolute top-[18px] right-px flex h-[77px] w-[23px] flex-col items-center rounded-[3px] border border-[#aaa] bg-[#f0f0f0] pt-[2px]">
            <svg class="h-[71px] w-[19px]" viewBox="0 0 19 71" fill="none"><circle cx="15" cy="2.500" r="2" stroke="#999"/><path d="M13.500 11.500v9M13 11.500H8a6 6 0 0 0 0 13h3" stroke="#8b96a8"/><circle cx="8" cy="18" r="3" stroke="#8b96a8"/><path d="M10 22h3l-3 4h3M14.500 21.500v4c4 0 4-4 0-4" stroke="#4a78b8"/><path d="M7 31h4l-2 2zM7 58h4l-2 2z" fill="#555"/><path d="M1 36.500h17" stroke="#ccc"/><path d="M4 42h8v8H4z" fill="#9fce94"/><circle cx="12" cy="49" r="2" stroke="#666"/><path d="M13 50l3 4" stroke="#666"/><circle cx="15" cy="68" r="2" stroke="#999"/></svg>
          </div>
        </div>
        <!-- view controls -->
        <div class="flex h-[14px] shrink-0 items-center border-b border-[#d0d0d0] bg-[#f0f0f0] pl-[18px] [&>button]:flex [&>button]:w-[18px] [&>button]:justify-center [&>button>svg]:h-[10px] [&>button>svg]:w-[12px]">
          <span class="w-[48px] font-['Liberation_Mono',monospace] text-[9px] text-[#333]">1 : 100</span>
          <button aria-label="详细程度"><svg viewBox="0 0 12 10"><path d="M1 1.500h10v7H1z" fill="#fff" stroke="#555"/></svg></button>
          <button aria-label="视觉样式"><svg viewBox="0 0 12 10"><path d="M1 4.500h7v4H1zM1 4.500l3-3h7l-3 3M11 1.500v4l-3 3" fill="#fff" stroke="#444"/></svg></button>
          <button aria-label="日光路径"><svg viewBox="0 0 12 10"><circle cx="5" cy="4" r="3" fill="#fff3c0" stroke="#d09a20"/><path d="M6 5l5 4m0-4L6 9" stroke="#b02a2a" stroke-width="1.500"/></svg></button>
          <button aria-label="阴影"><svg viewBox="0 0 12 10"><circle cx="5" cy="4" r="3" fill="#cfe3f5" stroke="#4a7fb4"/><path d="M1 9h6" stroke="#4a7fb4"/><path d="M7 4l4 5m0-5L7 9" stroke="#b02a2a" stroke-width="1.500"/></svg></button>
          <button aria-label="裁剪视图"><svg viewBox="0 0 12 10"><path d="M1 7h6M3 4v5M3 4h5M5 2h6v4" fill="none" stroke="#5b8fba" stroke-width="1.500"/><path d="M7 5l4 4m0-4L7 9" stroke="#b02a2a" stroke-width="1.500"/></svg></button>
          <button aria-label="显示裁剪区域"><svg viewBox="0 0 12 10"><path d="M1 7h6M3 4v5M3 4h5M5 2h6v4" fill="none" stroke="#5b8fba" stroke-width="1.500"/><circle cx="9" cy="7" r="2" fill="#fff" stroke="#5b8fba"/></svg></button>
          <button aria-label="临时隐藏"><svg viewBox="0 0 12 10"><path d="M1 2l3 4 3-1M4 3l4-1 3 2-3 3-2-2" fill="none" stroke="#555"/></svg></button>
          <button aria-label="显示隐藏图元"><svg viewBox="0 0 12 10"><circle cx="6" cy="4" r="2" fill="#d8effa" stroke="#3b8db8"/><path d="M6 6v3" stroke="#3b8db8"/></svg></button>
          <button aria-label="临时视图属性"><svg viewBox="0 0 12 10"><path d="M1 1.500h9v7H1zM6 5h5v4H6z" fill="#f4f4f4" stroke="#bbb"/></svg></button>
          <button aria-label="分析模型"><svg viewBox="0 0 12 10"><path d="M1 9V4l3-2h4v7zM1 5h7M4 2v7" fill="#c9b69a" stroke="#666"/><circle cx="9" cy="4" r="2.500" fill="#f2d75a" stroke="#8a7420"/></svg></button>
          <button aria-label="滚动"><svg viewBox="0 0 12 10"><path d="M7 2L4 5l3 3" fill="none" stroke="#222" stroke-width="1.300"/></svg></button>
          <div class="ml-auto h-[12px] w-[286px]"><div class="h-full w-[13px] bg-[#c8c8c8]"></div></div>
        </div>
      </div>
      <div class="flex w-[12px] flex-col items-center bg-[#efefef] pt-[5px]">
        <svg class="h-[6px] w-[8px]"><use href="#up"/></svg>
        <div class="mt-[188px] h-[14px] w-full bg-[#c8c8c8]"></div>
      </div>
    </main>
  </div>

  <!-- status bar -->
  <footer class="flex h-[15px] shrink-0 items-start overflow-hidden border-t border-[#999] bg-linear-to-b from-[#e2e2e2] to-[#c6c6c6] pl-[2px]">
    <p class="w-[383px] pt-[2px] leading-[12px]">[&lt;草图&gt; : 模型线] 的延伸</p>
    <svg class="mt-px h-[14px] w-[14px]" viewBox="0 0 14 14"><circle cx="3" cy="5" r="2" fill="#ddd" stroke="#888"/><path d="M2 8h3v6H2zM7 3h4v11M9 6v8" fill="none" stroke="#888"/></svg>
    <select aria-label="工作集" class="mt-px h-[14px] w-[133px] appearance-none bg-white"><option></option></select>
    <svg class="mt-[6px] -ml-[12px] h-[6px] w-[8px] text-[#aaa]"><use href="#down"/></svg>
    <svg class="mt-[2px] ml-[7px] h-[12px] w-[12px]" viewBox="0 0 12 12"><path d="M1 1h10L7 6v6H5V6z" fill="#ccc" stroke="#888"/></svg>
    <span class="w-[25px] pl-[4px]">:0</span>
    <svg class="h-[14px] w-[28px]" viewBox="0 0 28 14"><path d="M0 3h10v11H0z" fill="#999"/><path d="M17 3h9v7h-9zM17 6h5M22 3v11" fill="#bbb" stroke="#999" stroke-width="1.500"/></svg>
    <select aria-label="设计选项" class="mt-px h-[14px] w-[99px] appearance-none bg-white pt-px pl-[2px] leading-[12px] text-[#777]"><option>主模型</option></select>
    <svg class="mt-[6px] -ml-[12px] h-[6px] w-[8px] text-[#aaa]"><use href="#down"/></svg>
  </footer>

  <!-- callout arrows, drawn across palette and canvas -->
  <svg class="pointer-events-none absolute inset-0 h-full w-full" viewBox="0 0 1000 574" preserveAspectRatio="xMinYMin meet">
    <path d="M222 186L127 246M268 383L371 314" stroke="#c11a1a" stroke-width="2.500"/>
    <path d="M117 252l11-12 6 9zM381 307l-9 13-7-9z" fill="#f01515" stroke="#c11a1a"/>
  </svg>

  <!-- site badge -->
  <div class="absolute right-0 bottom-0 flex h-[80px] items-end">
    <div class="h-[60px] w-[25px] overflow-hidden pt-[12px] text-[22px] leading-[32px] text-[#e2e2e2]">jin</div>
    <svg class="h-[60px] w-[5px]" viewBox="0 0 5 60"><path d="M1 2h4v5H1zM1 10h4v4H1zM0 20h5v4H0zM2 26h3v14H2z" fill="#118a5c"/></svg>
    <div class="flex h-full w-[207px] flex-col items-center bg-[radial-gradient(ellipse_at_50%_0%,#7fe0e0_0%,#7fe0e000_45%),radial-gradient(ellipse_at_55%_60%,#86cdf5_0%,#86cdf500_55%),linear-gradient(to_bottom,#86b4d8_0%,#8799dc_40%,#6f8ccc_70%,#3c5c9c_100%)] pt-[6px] pl-[8px] font-bold">
      <p class="bg-linear-to-r from-[#14a0b8] via-[#2aae4a] to-[#14a0c0] bg-clip-text font-['Noto_Sans_CJK_SC',sans-serif] text-[32px] leading-[38px] font-black text-transparent">我爱学教程</p>
      <a href="#" class="font-['Open_Sans',sans-serif] text-[19px] leading-[32px] font-semibold text-[#2fa676]">www.52xjc.com</a>
    </div>
  </div>
</body>
</html>
